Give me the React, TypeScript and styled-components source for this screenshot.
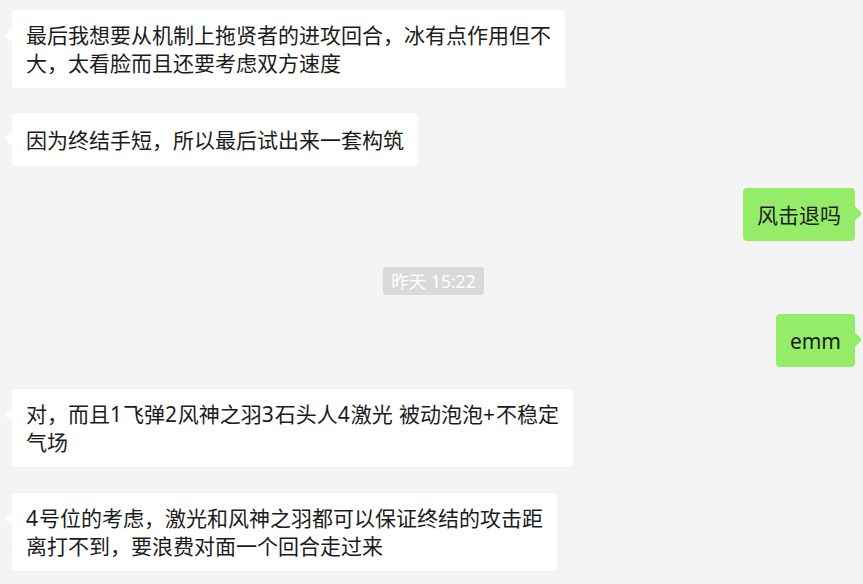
import React from "react";
import styled, { createGlobalStyle } from "styled-components";

const Global = createGlobalStyle`
  html, body { margin: 0; padding: 0; background: #f4f4f4; }
  body { font-family: "Noto Sans", "Noto Sans CJK SC", sans-serif; }
`;

const Page = styled.div`
  width: 863px;
  height: 584px;
  box-sizing: border-box;
  padding: 10px 8px 0 12px;
  background: #f4f4f4;
  display: flex;
  flex-direction: column;
  overflow: hidden;
`;

const Row = styled.div<{ $self?: boolean; $top: number }>`
  display: flex;
  justify-content: ${(p) => (p.$self ? "flex-end" : "flex-start")};
  margin-top: ${(p) => p.$top}px;
`;

const Bubble = styled.div<{ $self?: boolean }>`
  position: relative;
  box-sizing: border-box;
  min-height: 53px;
  padding: 11px 14px;
  border-radius: 4px;
  background: ${(p) => (p.$self ? "#95ec69" : "#ffffff")};
  color: #1b1b1b;
  font-family: "Noto Sans", "Noto Sans CJK SC", sans-serif;
  font-size: 21px;
  line-height: 28px;
  display: flex;
  flex-direction: column;
  justify-content: center;
  white-space: nowrap;

  &::before {
    content: "";
    position: absolute;
    top: 20px;
    ${(p) => (p.$self ? "right: -5px;" : "left: -5px;")}
    width: 11px;
    height: 11px;
    background: inherit;
    transform: rotate(45deg);
    border-radius: 2px;
  }
`;

const Line = styled.span`
  display: block;
`;

const Latin = styled.span`
  letter-spacing: 0.9px;
`;

const TimeChip = styled.div`
  align-self: center;
  margin-top: 26px;
  height: 28px;
  padding: 0 8px;
  border-radius: 3px;
  background: #d9d9d9;
  color: #ffffff;
  font-family: "Noto Sans", "Noto Sans CJK SC", sans-serif;
  font-size: 17.5px;
  line-height: 28px;
`;

type Msg = { self?: boolean; top: number; lines: React.ReactNode[] };

const before: Msg[] = [
  {
    top: 0,
    lines: [
      "最后我想要从机制上拖贤者的进攻回合，冰有点作用但不",
      "大，太看脸而且还要考虑双方速度",
    ],
  },
  { top: 25, lines: ["因为终结手短，所以最后试出来一套构筑"] },
  { self: true, top: 22, lines: ["风击退吗"] },
];

const after: Msg[] = [
  { self: true, top: 19, lines: ["emm"] },
  {
    top: 22,
    lines: [
      <>
        对，而且<Latin>1</Latin>飞弹<Latin>2</Latin>风神之羽<Latin>3</Latin>
        石头人<Latin>4</Latin>激光<Latin> </Latin>被动泡泡<Latin>+</Latin>不稳定
      </>,
      "气场",
    ],
  },
  {
    top: 26,
    lines: [
      <>
        <Latin>4</Latin>号位的考虑，激光和风神之羽都可以保证终结的攻击距
      </>,
      "离打不到，要浪费对面一个回合走过来",
    ],
  },
];

const Message = ({ m }: { m: Msg }) => (
  <Row $self={m.self} $top={m.top}>
    <Bubble $self={m.self}>
      {m.lines.map((l, i) => (
        <Line key={i}>{l}</Line>
      ))}
    </Bubble>
  </Row>
);

export default function App() {
  return (
    <>
      <Global />
      <Page>
        {before.map((m, i) => (
          <Message key={"b" + i} m={m} />
        ))}
        <TimeChip>昨天 15:22</TimeChip>
        {after.map((m, i) => (
          <Message key={"a" + i} m={m} />
        ))}
      </Page>
    </>
  );
}
